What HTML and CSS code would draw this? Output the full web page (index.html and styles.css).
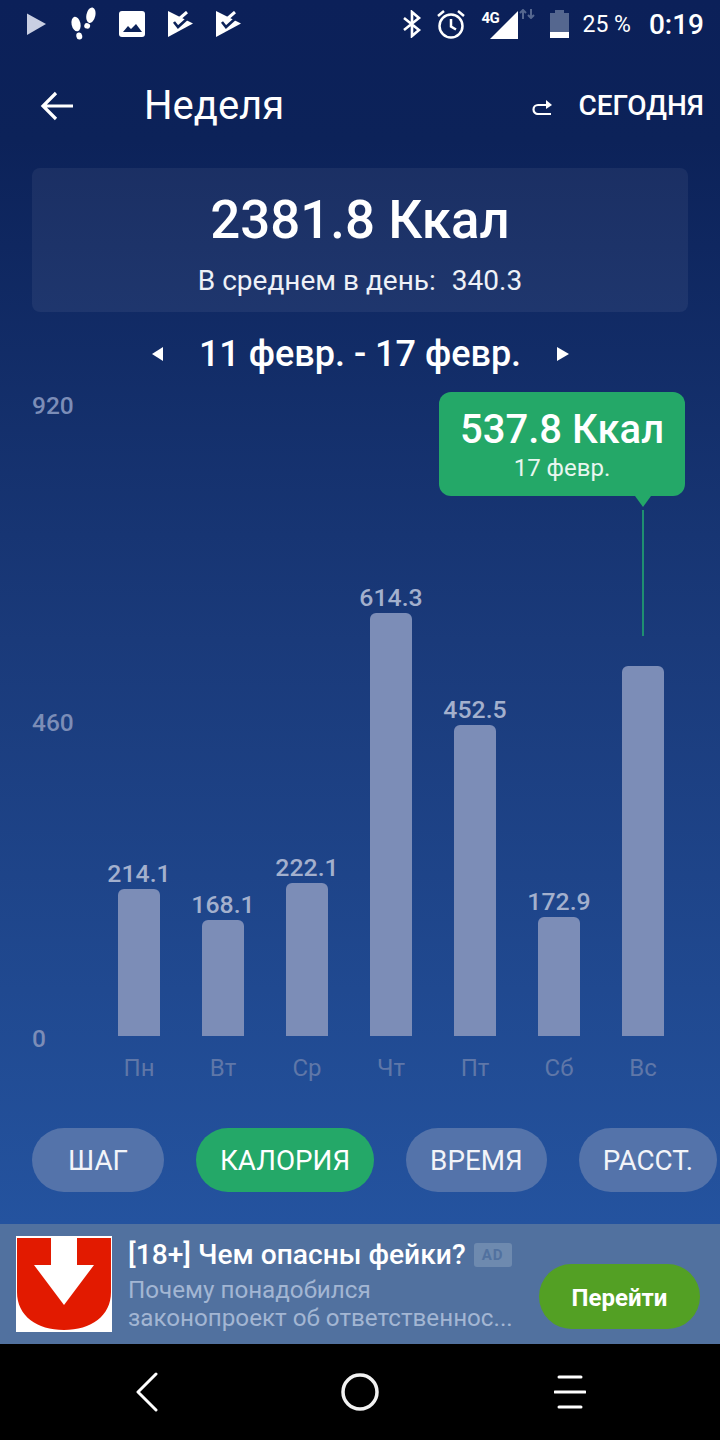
FILE: index.html
```html
<!DOCTYPE html>
<html lang="ru">
<head>
    <meta charset="UTF-8">
    <meta name="viewport" content="width=device-width, initial-scale=1.0">
    <title>Неделя</title>
    <link rel="stylesheet" href="styles.css">
</head>
<body>
    <div class="screen">
        <div class="status-bar">
            <div class="status-left">
                <svg width="21" height="24" viewBox="0 0 21 24"><path d="M1 1.500L20 12 1 23z" fill="#c9cfe2"/></svg>
                <svg width="26" height="34" viewBox="0 0 28 36" fill="#fff">
                    <ellipse cx="22.500" cy="8.500" rx="4.800" ry="8.500" transform="rotate(12 22.500 8.500)"/>
                    <ellipse cx="18.500" cy="20" rx="3.200" ry="3" transform="rotate(12 18.500 20)"/>
                    <ellipse cx="6.500" cy="18" rx="4.800" ry="8" transform="rotate(-12 6.500 18)"/>
                    <ellipse cx="10" cy="31" rx="3.200" ry="3.800" transform="rotate(-12 10 31)"/>
                </svg>
                <svg width="26" height="26" viewBox="0 0 26 26">
                    <rect width="26" height="26" rx="3" fill="#fff"/>
                    <path d="M4 21l5-6 3 3 5-5 6 8z" fill="#0c2259"/>
                </svg>
                <svg width="25" height="26" viewBox="0 0 25 26">
                    <path d="M0 0l25 12.500L0 26z" fill="#fff"/>
                    <path d="M11 8l8-7" fill="none" stroke="#fff" stroke-width="3"/>
                    <path d="M6 11l4 5 10-9" fill="none" stroke="#0c2259" stroke-width="2.600"/>
                </svg>
                <svg width="25" height="26" viewBox="0 0 25 26">
                    <path d="M0 0l25 12.500L0 26z" fill="#fff"/>
                    <path d="M11 8l8-7" fill="none" stroke="#fff" stroke-width="3"/>
                    <path d="M6 11l4 5 10-9" fill="none" stroke="#0c2259" stroke-width="2.600"/>
                </svg>
            </div>
            <div class="status-right">
                <svg width="20" height="28" viewBox="0 0 20 28" fill="none" stroke="#fff" stroke-width="2.600">
                    <path d="M2 8l15 12-7 6V2l7 6L2 20"/>
                </svg>
                <svg class="alarm-icon" width="30" height="30" viewBox="0 0 30 30" fill="none" stroke="#fff" stroke-width="2.500">
                    <circle cx="15" cy="17" r="11.500"/>
                    <path d="M15 10v7.500l5 3"/>
                    <path d="M2 7l6-5M28 7l-6-5"/>
                </svg>
                <div class="signal">
                    <span class="net-label">4G</span>
                    <svg width="30" height="30" viewBox="0 0 30 30"><path d="M1 29L29 1v28z" fill="#fff"/></svg>
                    <svg class="net-arrows" width="16" height="10" viewBox="0 0 16 10" fill="none" stroke="#55678f" stroke-width="2">
                        <path d="M4 10V1M1 4l3-3 3 3M12 0v9M9 6l3 3 3-3"/>
                    </svg>
                </div>
                <svg width="19" height="28" viewBox="0 0 19 28">
                    <path d="M0 3h5V0h9v3h5v25H0z" fill="#55678f"/>
                    <rect y="22" width="19" height="6" fill="#fff"/>
                </svg>
                <span class="battery-text">25 %</span>
                <span class="clock">0:19</span>
            </div>
        </div>

        <header class="toolbar">
            <svg width="34" height="32" viewBox="0 0 34 32" fill="none" stroke="#fff" stroke-width="3.200">
                <path d="M33 16H3M16 3L3 16l13 13"/>
            </svg>
            <h1>Неделя</h1>
            <div class="today">
                <svg width="22" height="18" viewBox="0 0 22 18" fill="none" stroke="#fff" stroke-width="2.200">
                    <path d="M20 17H7a4.500 4.500 0 0 1 0-9h9"/>
                    <path d="M15 3l6 5-6 4z" fill="#fff" stroke="none"/>
                </svg>
                <span>СЕГОДНЯ</span>
            </div>
        </header>

        <section class="summary">
            <div class="summary-total">2381.8 Ккал</div>
            <div class="summary-avg"><span>В среднем в день:</span><span>340.3</span></div>
        </section>

        <div class="range">
            <svg width="12" height="16" viewBox="0 0 12 16"><path d="M12 1v14L1 8z" fill="#fff"/></svg>
            <span>11 февр. - 17 февр.</span>
            <svg width="12" height="16" viewBox="0 0 12 16"><path d="M0 1v14l12-7z" fill="#fff"/></svg>
        </div>

        <section class="chart">
            <div class="y-axis">
                <span>920</span>
                <span>460</span>
                <span>0</span>
            </div>
            <div class="plot" id="plot"></div>
            <div class="tooltip">
                <div class="tooltip-value">537.8 Ккал</div>
                <div class="tooltip-date">17 февр.</div>
            </div>
            <div class="tooltip-arrow"></div>
            <div class="tooltip-line"></div>
        </section>

        <nav class="tabs">
            <div class="tab">ШАГ</div>
            <div class="tab active">КАЛОРИЯ</div>
            <div class="tab">ВРЕМЯ</div>
            <div class="tab">РАССТ.</div>
        </nav>

        <aside class="ad">
            <svg class="ad-logo" width="96" height="96" viewBox="0 0 96 96">
                <rect width="96" height="96" fill="#fff"/>
                <path d="M1 2h34v27H18l30 40 30-40H61V2h34v54c0 24-20 38-47 38S1 80 1 56z" fill="#e21a00"/>
            </svg>
            <div class="ad-text">
                <div class="ad-title"><span>[18+] Чем опасны фейки?</span><span class="ad-badge">AD</span></div>
                <div class="ad-desc">Почему понадобился<br>законопроект об ответственнос...</div>
            </div>
            <div class="ad-button">Перейти</div>
        </aside>

        <div class="nav-bar">
            <svg width="24" height="40" viewBox="0 0 24 40" fill="none" stroke="#fff" stroke-width="3" stroke-linecap="round" stroke-linejoin="round">
                <path d="M21 2L3 20l18 18"/>
            </svg>
            <svg class="nav-home" width="38" height="38" viewBox="0 0 38 38" fill="none" stroke="#f2f2f2" stroke-width="3.500"><circle cx="19" cy="19" r="17"/></svg>
            <svg class="nav-menu" width="32" height="34" viewBox="0 0 32 34" fill="none" stroke="#fff" stroke-width="3" stroke-linecap="round">
                <path d="M5 2h22M1 17h30M5 32h22"/>
            </svg>
        </div>
    </div>

    <script>
        // Chart data
        const days = [
            { name: "Пн", label: "214.1", height: 147 },
            { name: "Вт", label: "168.1", height: 116 },
            { name: "Ср", label: "222.1", height: 153 },
            { name: "Чт", label: "614.3", height: 423 },
            { name: "Пт", label: "452.5", height: 311 },
            { name: "Сб", label: "172.9", height: 119 },
            { name: "Вс", label: "", height: 370 }
        ];

        const plot = document.getElementById('plot');
        days.forEach(day => {
            plot.innerHTML += `
                <div class="day">
                    <div class="bar-label">${day.label}</div>
                    <div class="bar" style="height: ${day.height}px"></div>
                    <div class="day-name">${day.name}</div>
                </div>
            `;
        });
    </script>
</body>
</html>
```

FILE: styles.css
```css
* {
    margin: 0;
    padding: 0;
    box-sizing: border-box;
}

body {
    background: #000;
    color: #fff;
    font-family: Roboto, "Noto Sans", sans-serif;
    width: 720px;
    height: 1440px;
    overflow: hidden;
}

.screen {
    width: 720px;
    height: 1440px;
    display: flex;
    flex-direction: column;
    background: linear-gradient(#0b2059 0, #0c2259 140px, #1a3a7a 640px, #24539f 1224px);
}

.status-bar {
    height: 48px;
    flex: none;
    display: flex;
    justify-content: space-between;
    align-items: center;
    padding: 0 16px 0 26px;
}

.status-left {
    display: flex;
    align-items: center;
    gap: 23px;
}

.status-right {
    display: flex;
    align-items: center;
}

.alarm-icon {
    margin-left: 14px;
}

.signal {
    display: flex;
    align-items: flex-end;
    position: relative;
    width: 69px;
    height: 32px;
    margin-left: 15px;
    padding-left: 8px;
}

.net-label {
    position: absolute;
    left: 0;
    top: 1px;
    font-size: 15px;
    font-weight: 700;
    letter-spacing: -0.5px;
}

.net-arrows {
    align-self: flex-start;
    margin-top: 1px;
}

.battery-text {
    font-size: 23px;
    margin-left: 13px;
}

.clock {
    font-size: 28px;
    font-weight: 500;
    margin-left: 18px;
}

.toolbar {
    height: 112px;
    flex: none;
    display: flex;
    align-items: center;
    padding: 3px 16px 0 40px;
}

h1 {
    font-size: 40px;
    font-weight: 400;
    margin-left: 70px;
}

.today {
    margin-left: auto;
    display: flex;
    align-items: center;
    gap: 25px;
    font-size: 28px;
    font-weight: 500;
}

.summary {
    height: 144px;
    flex: none;
    margin: 8px 32px 0;
    background: rgba(255, 255, 255, 0.06);
    border-radius: 8px;
    text-align: center;
    padding-top: 21px;
}

.summary-total {
    font-size: 52.800px;
    font-weight: 500;
    line-height: 62px;
}

.summary-avg {
    display: flex;
    justify-content: center;
    gap: 16px;
    font-size: 28px;
    line-height: 32px;
    margin-top: 14px;
    color: #eef1f7;
}

.range {
    height: 80px;
    flex: none;
    display: flex;
    justify-content: center;
    align-items: center;
    gap: 36px;
    padding-top: 4px;
    font-size: 36px;
    font-weight: 500;
}

.chart {
    position: relative;
    height: 736px;
    flex: none;
    display: flex;
    padding-left: 32px;
}

.y-axis {
    width: 65px;
    height: 661px;
    display: flex;
    flex-direction: column;
    justify-content: space-between;
    font-size: 24.500px;
    font-weight: 500;
    line-height: 28px;
    color: #7c8db7;
}

.plot {
    display: flex;
    height: 704px;
}

.day {
    width: 84px;
    display: flex;
    flex-direction: column;
    align-items: center;
    justify-content: flex-end;
}

.bar-label {
    font-size: 24.800px;
    font-weight: 500;
    line-height: 28px;
    color: #a3b0cd;
    margin-bottom: 1px;
}

.bar {
    width: 42px;
    background: #7c8db7;
    border-radius: 6px 6px 0 0;
}

.day-name {
    height: 60px;
    padding-top: 18px;
    font-size: 24px;
    line-height: 28px;
    color: #5f77a8;
}

.tooltip {
    position: absolute;
    left: 439px;
    top: 0;
    width: 246px;
    height: 104px;
    background: #24a868;
    border-radius: 12px;
    text-align: center;
    padding-top: 13px;
}

.tooltip-value {
    font-size: 40px;
    font-weight: 500;
    line-height: 49px;
}

.tooltip-date {
    font-size: 24px;
    line-height: 28px;
    color: #e8f6ef;
}

.tooltip-arrow {
    position: absolute;
    left: 635px;
    top: 104px;
    border-left: 8px solid transparent;
    border-right: 8px solid transparent;
    border-top: 11px solid #24a868;
}

.tooltip-line {
    position: absolute;
    left: 642px;
    top: 118px;
    width: 2px;
    height: 126px;
    background: #1f8f70;
}

.tabs {
    height: 64px;
    flex: none;
    display: flex;
    gap: 32px;
    padding-left: 32px;
    font-size: 27.800px;
}

.tab {
    height: 64px;
    padding: 0 24px;
    border-radius: 32px;
    background: #5473aa;
    display: flex;
    align-items: center;
    white-space: nowrap;
    color: #f2f4f9;
}

.tab:first-child {
    padding: 0 36px;
}

.tab.active {
    background: #24a868;
    color: #fff;
}

.ad {
    height: 120px;
    flex: none;
    margin-top: 32px;
    background: #51719f;
    display: flex;
    align-items: center;
    padding: 0 20px 0 16px;
}

.ad-logo {
    flex: none;
}

.ad-text {
    margin-left: 16px;
    width: 395px;
    padding-top: 2px;
}

.ad-title {
    display: flex;
    align-items: center;
    gap: 8px;
    font-size: 28.200px;
    font-weight: 500;
    line-height: 32px;
    white-space: nowrap;
}

.ad-badge {
    width: 38px;
    height: 24px;
    background: #6e8aaf;
    border-radius: 3px;
    color: #51719f;
    font-size: 15px;
    font-weight: 700;
    letter-spacing: 1px;
    line-height: 24px;
    text-align: center;
}

.ad-desc {
    font-size: 24.200px;
    line-height: 28px;
    margin-top: 5px;
    color: #a3b6d3;
    white-space: nowrap;
}

.ad-button {
    margin-left: auto;
    margin-top: 25px;
    padding-top: 2px;
    width: 161px;
    height: 65px;
    border-radius: 33px;
    background: #53a024;
    display: flex;
    align-items: center;
    justify-content: center;
    font-size: 24px;
    font-weight: 700;
}

.nav-bar {
    height: 96px;
    flex: none;
    background: #000;
    display: flex;
    align-items: center;
    padding-left: 135px;
}

.nav-home {
    margin-left: 182px;
}

.nav-menu {
    margin-left: 175px;
}
```
